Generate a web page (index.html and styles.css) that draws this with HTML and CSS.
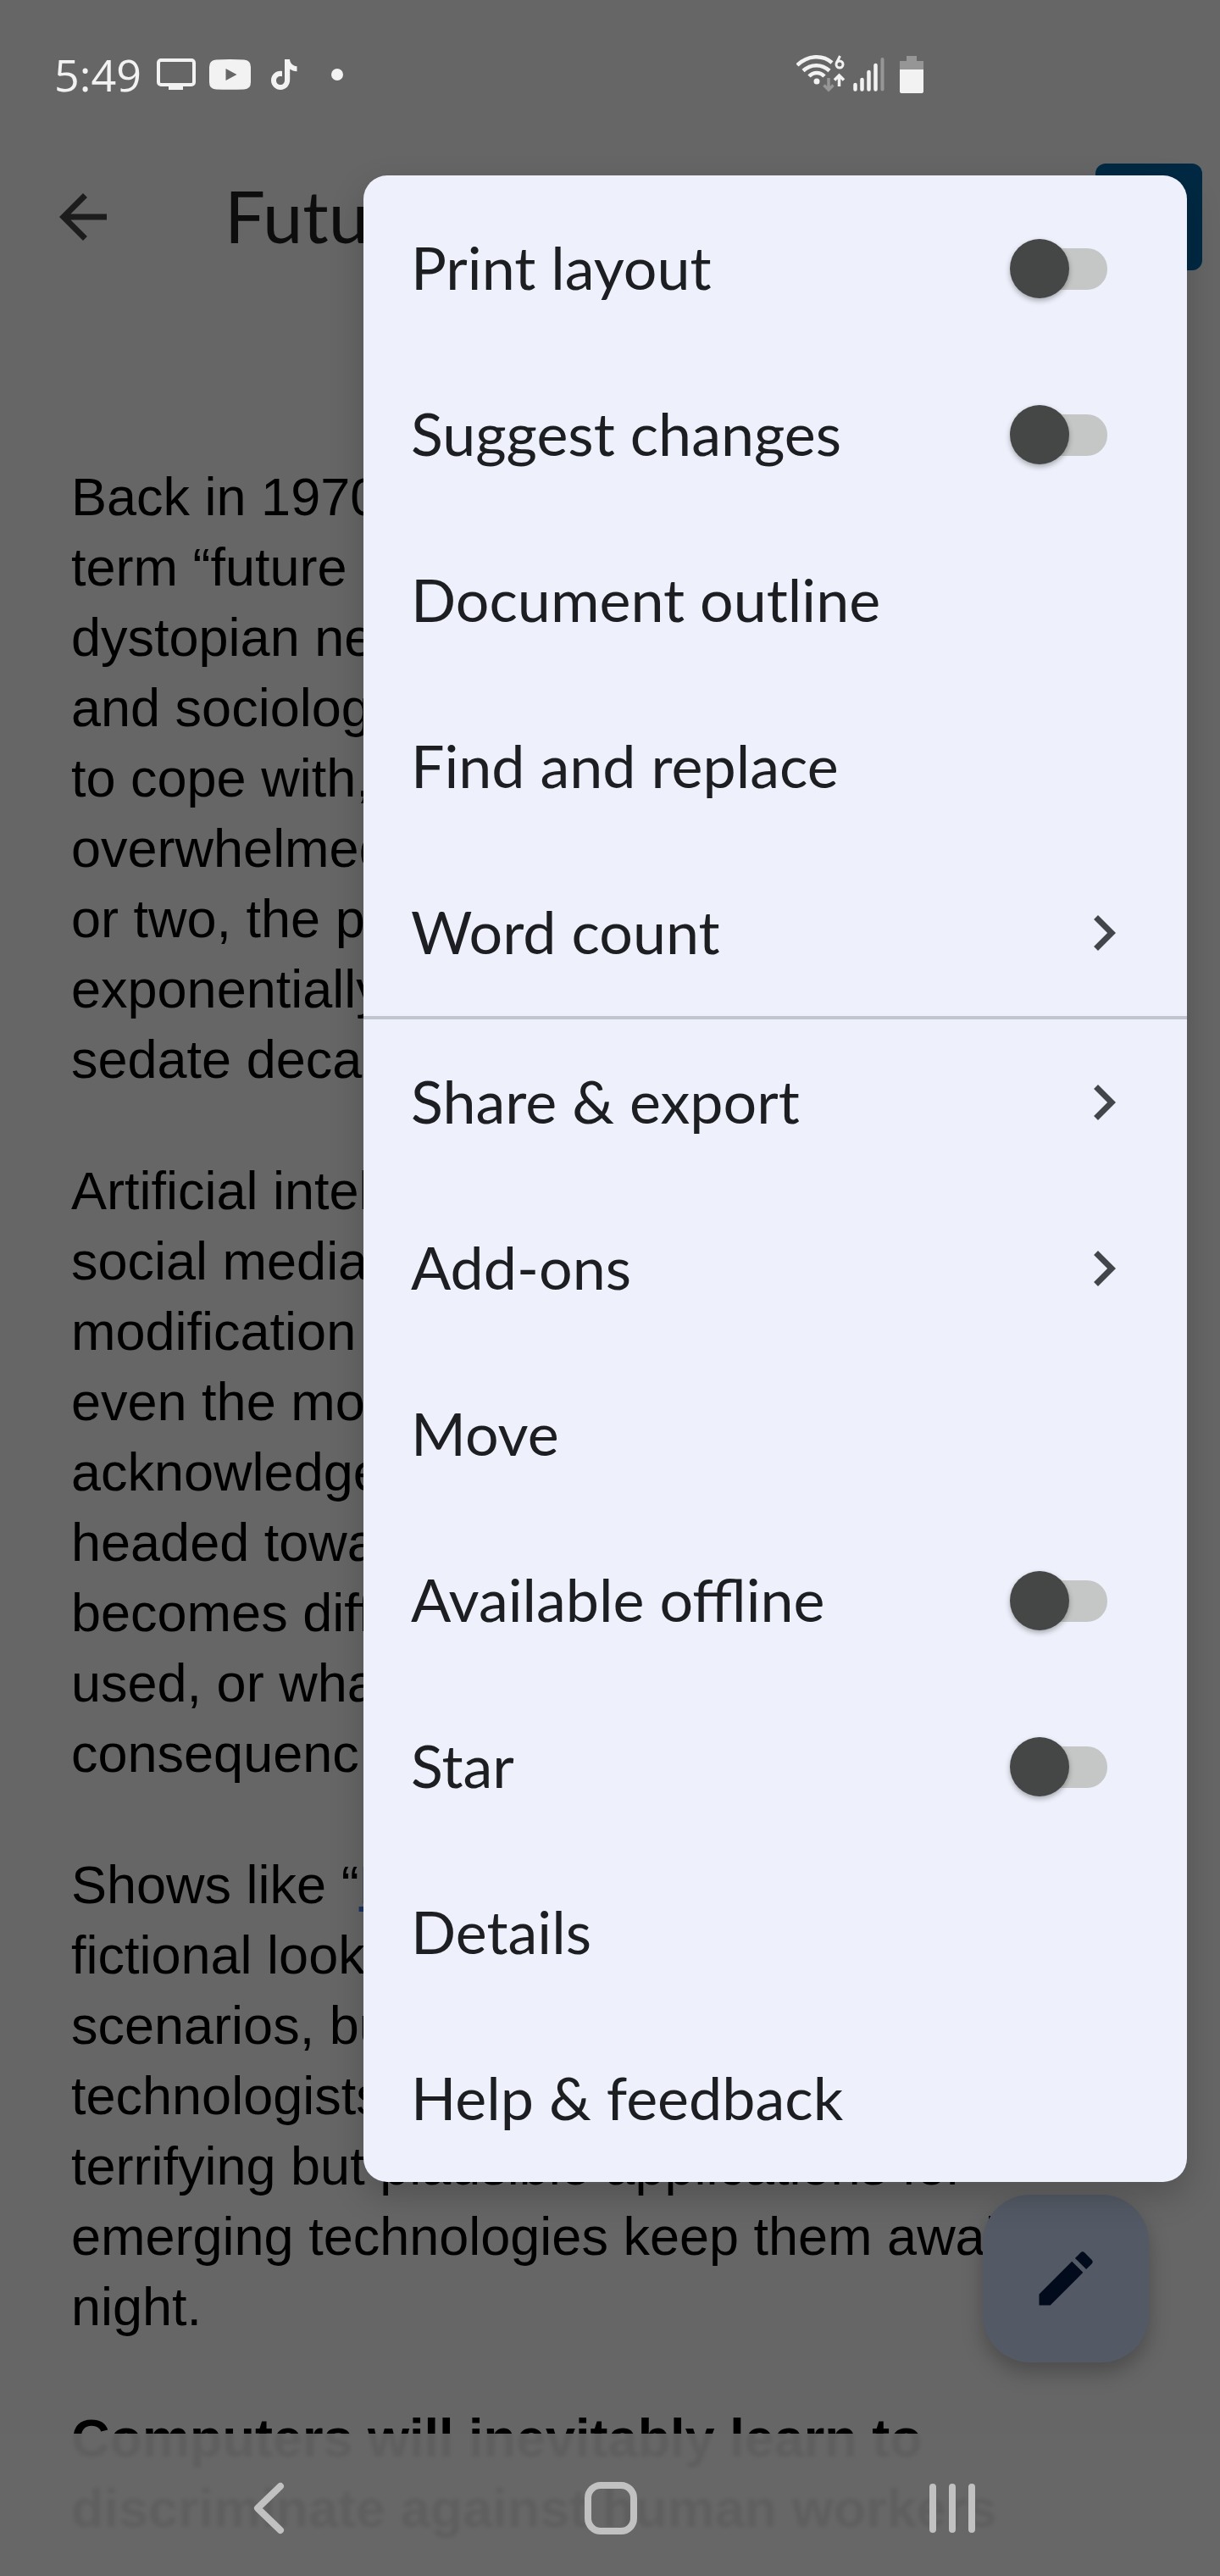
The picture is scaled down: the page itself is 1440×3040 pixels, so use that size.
FILE: index.html
```html
<!DOCTYPE html>
<html lang="en">
<head>
<meta charset="utf-8">
<meta name="viewport" content="width=device-width, initial-scale=1">
<title>Document</title>
<link rel="stylesheet" href="styles.css">
</head>
<body>
<div class="screen">
  <div class="status">
    <div class="status-left">
      <span class="clock">5:49</span>
      <svg class="icon-tv" width="46" height="38" viewBox="0 0 46 38"><rect x="2" y="2" width="42" height="29" rx="3" fill="none" stroke="#f2f2f2" stroke-width="4"/><path d="M14 31h17v6H14z" fill="#f2f2f2"/></svg>
      <svg class="icon-video" width="49" height="36" viewBox="0 0 49 36"><path fill-rule="evenodd" fill="#f2f2f2" d="M8 .5Q24.500-.5 41 .5Q49 1 49 9V27Q49 35 41 35.500Q24.500 36 8 35.500Q0 35 0 27V9Q0 1 8 .5ZM19.500 11V25L32.500 18Z"/></svg>
      <svg class="icon-note" width="31" height="36" viewBox="0 0 31 36"><path d="M16 0h6c.4 4.500 3.500 7.800 8.500 8.200v6c-3.300 0-6-1-8.300-2.600V24c0 7-5 12-11 12S0 31 0 25c0-7 6-12 13-11v6.300c-4-1-7 1.200-7 4.700 0 3 2.300 5 5 5 3 0 5-2 5-5.500z" fill="#f2f2f2"/></svg>
      <span class="dot"></span>
    </div>
    <div class="status-right">
      <svg width="58" height="48" viewBox="0 0 58 48" fill="none" stroke="#f2f2f2" stroke-width="4.500"><path d="M1 13C13 1 31 0 42 10M8 19.500C17 11 30 11 39 19.500M15 26C20 20.500 28 20.500 33 26"/><circle cx="24" cy="32" r="3.500" fill="#f2f2f2" stroke="none"/><path d="M38 28v14M32.500 36.500L38 42l5.500-5.500" stroke="#969696" stroke-width="3.500"/><path d="M50.500 38V25M45 30.500L50.500 25l5.500 5.500" stroke-width="3.500"/><circle cx="51" cy="12" r="4" stroke-width="3"/><path d="M51.500 2L47.500 10" stroke-width="3"/></svg>
      <svg class="icon-signal" width="37" height="42" viewBox="0 0 37 42" stroke="#f2f2f2" stroke-width="4.500" stroke-linecap="round"><path d="M2.500 33v5.500M10.500 27v11.500M18.500 18v20.500M26.500 10v28.500"/><path d="M34.500 3v35.500" stroke="#969696" stroke-width="4"/></svg>
      <svg class="icon-battery" width="28" height="44" viewBox="0 0 28 44"><path d="M8 0h12v6h8v11H0V6h8z" fill="#969696"/><path d="M0 16h28v26q0 2-2 2H2q-2 0-2-2z" fill="#f2f2f2"/></svg>
    </div>
  </div>

  <header class="toolbar">
    <button class="icon-button" type="button" aria-label="Back"><svg width="84" height="84" viewBox="0 0 24 24" fill="#1c1c1c"><path d="M20 11H7.830l5.590-5.590L12 4l-8 8 8 8 1.410-1.410L7.830 13H20v-2z"/></svg></button>
    <h1 class="title">Futu</h1>
    <button class="share" type="button" aria-label="Share"></button>
  </header>

  <main class="document">
    <p>Back in 1970<br>term “future<br>dystopian ne<br>and sociolog<br>to cope with,<br>overwhelmed<br>or two, the p<br>exponentially<br>sedate deca</p>
    <p>Artificial intel<br>social media<br>modification<br>even the mo<br>acknowledge<br>headed towa<br>becomes diff<br>used, or wha<br>consequenc</p>
    <p>Shows like “<a href="#">B</a><br>fictional look<br>scenarios, bu<br>technologists<br>terrifying but plausible applications for<br>emerging technologies keep them awake<br>night.</p>
    <h2>Computers will inevitably learn to<br>discriminate against human workers</h2>
  </main>

  <button class="fab" type="button" aria-label="Edit"><svg width="84" height="84" viewBox="0 0 24 24" fill="#020b1c"><path d="M3 17.250V21h3.750L17.810 9.940l-3.750-3.750L3 17.250zM20.710 7.040a1 1 0 0 0 0-1.410l-2.340-2.340a1 1 0 0 0-1.410 0l-1.830 1.830 3.750 3.750 1.830-1.830z"/></svg></button>

  <nav class="menu" aria-label="Document options">
    <label class="item"><span>Print layout</span><input class="switch" type="checkbox"></label>
    <label class="item"><span>Suggest changes</span><input class="switch" type="checkbox"></label>
    <button class="item" type="button"><span>Document outline</span></button>
    <button class="item" type="button"><span>Find and replace</span></button>
    <button class="item" type="button"><span>Word count</span><svg class="chevron" viewBox="0 0 24 24"><path d="M10 6L8.590 7.410 13.170 12l-4.580 4.590L10 18l6-6z"/></svg></button>
    <hr class="divider">
    <button class="item" type="button"><span>Share &amp; export</span><svg class="chevron" viewBox="0 0 24 24"><path d="M10 6L8.590 7.410 13.170 12l-4.580 4.590L10 18l6-6z"/></svg></button>
    <button class="item" type="button"><span>Add-ons</span><svg class="chevron" viewBox="0 0 24 24"><path d="M10 6L8.590 7.410 13.170 12l-4.580 4.590L10 18l6-6z"/></svg></button>
    <button class="item" type="button"><span>Move</span></button>
    <label class="item"><span>Available offline</span><input class="switch" type="checkbox"></label>
    <label class="item"><span>Star</span><input class="switch" type="checkbox"></label>
    <button class="item" type="button"><span>Details</span></button>
    <button class="item" type="button"><span>Help &amp; feedback</span></button>
  </nav>

  <div class="navbar">
    <button type="button" aria-label="Back"><svg width="64" height="64" viewBox="0 0 64 64"><path d="M46 6L19 32l27 26"/></svg></button>
    <button type="button" aria-label="Home"><svg width="64" height="64" viewBox="0 0 64 64"><rect x="6" y="5" width="54" height="54" rx="15"/></svg></button>
    <button type="button" aria-label="Recent apps"><svg width="64" height="64" viewBox="0 0 64 64"><path d="M10 7v50M33 7v50M56 7v50"/></svg></button>
  </div>
</div>
</body>
</html>
```
FILE: styles.css
```css
* {
  box-sizing: border-box;
}

body {
  margin: 0;
  background: #666;
  font-family: Lato, "Open Sans", sans-serif;
}

button {
  border: 0;
  padding: 0;
  background: none;
  color: inherit;
  font: inherit;
}

svg {
  display: block;
  flex: none;
}

.screen {
  position: relative;
  min-height: 100vh;
  overflow: hidden;
}

.status {
  display: flex;
  align-items: center;
  justify-content: space-between;
  height: 176px;
  padding: 0 350px 0 64px;
}

.status-left,
.status-right {
  display: flex;
  align-items: center;
}

.clock {
  margin-right: 18px;
  color: #f2f2f2;
  font: 52px/64px "Open Sans", sans-serif;
}

.icon-video {
  margin-left: 16px;
}

.icon-note {
  margin-left: 24px;
}

.dot {
  width: 14px;
  height: 14px;
  margin-left: 40px;
  border-radius: 50%;
  background: #f2f2f2;
}

.icon-signal {
  margin-left: 9px;
}

.icon-battery {
  margin-left: 18px;
}

.toolbar {
  display: flex;
  align-items: center;
  height: 160px;
  padding: 0 21px 0 56px;
}

.title {
  flex: 1;
  margin: 0 0 0 125px;
  padding-bottom: 4px;
  color: #0d0d0d;
  font-size: 85px;
  font-weight: 400;
  line-height: 104px;
}

.share {
  width: 126px;
  height: 126px;
  border-radius: 12px;
  background: #002943;
}

.document {
  padding: 209px 0 0 84px;
  color: #000;
  font: 63px/83px "Liberation Sans", Arial, sans-serif;
  white-space: nowrap;
}

.document p {
  margin: 0 0 72px;
}

.document h2 {
  margin: 0;
  font-size: 63px;
}

.document a {
  color: #1b3360;
}

.fab {
  position: absolute;
  right: 84px;
  bottom: 252px;
  display: grid;
  place-items: center;
  width: 196px;
  height: 198px;
  border-radius: 56px;
  background: #535a65;
  box-shadow: 0 12px 24px rgba(0, 0, 0, 0.25);
}

.menu {
  position: absolute;
  top: 207px;
  right: 39px;
  display: flex;
  flex-direction: column;
  width: 972px;
  padding-top: 12px;
  border-radius: 28px;
  background: #eef1fc;
  box-shadow: 0 16px 40px rgba(0, 0, 0, 0.2);
}

.item {
  display: flex;
  align-items: center;
  justify-content: space-between;
  height: 196px;
  padding: 0 56px;
  color: #1c1e22;
  font-size: 70px;
  line-height: 84px;
  text-align: left;
}

.item span {
  padding-bottom: 4px;
}

.divider {
  width: 100%;
  height: 4px;
  margin: 0;
  border: 0;
  background: #c1c5ce;
}

.chevron {
  width: 84px;
  height: 84px;
  fill: #42464b;
}

.switch {
  display: flex;
  align-items: center;
  width: 115px;
  height: 70px;
  margin: 0 38px 0 0;
  appearance: none;
}

.switch::before {
  width: 70px;
  height: 70px;
  border-radius: 50%;
  background: #444746;
  box-shadow: 0 3px 6px rgba(0, 0, 0, 0.3);
  content: "";
  z-index: 1;
}

.switch::after {
  width: 80px;
  height: 49px;
  margin-left: -35px;
  border-radius: 24px;
  background: #c4c7c6;
  content: "";
}

.navbar {
  position: absolute;
  right: 0;
  bottom: 0;
  left: 0;
  display: flex;
  align-items: center;
  justify-content: center;
  gap: 339px;
  height: 168px;
  padding-top: 8px;
  background: rgba(103, 103, 103, 0.92);
  backdrop-filter: blur(2px);
}

.navbar svg {
  fill: none;
  stroke: #c1c1c1;
  stroke-width: 8;
  stroke-linecap: round;
  stroke-linejoin: round;
}
```
